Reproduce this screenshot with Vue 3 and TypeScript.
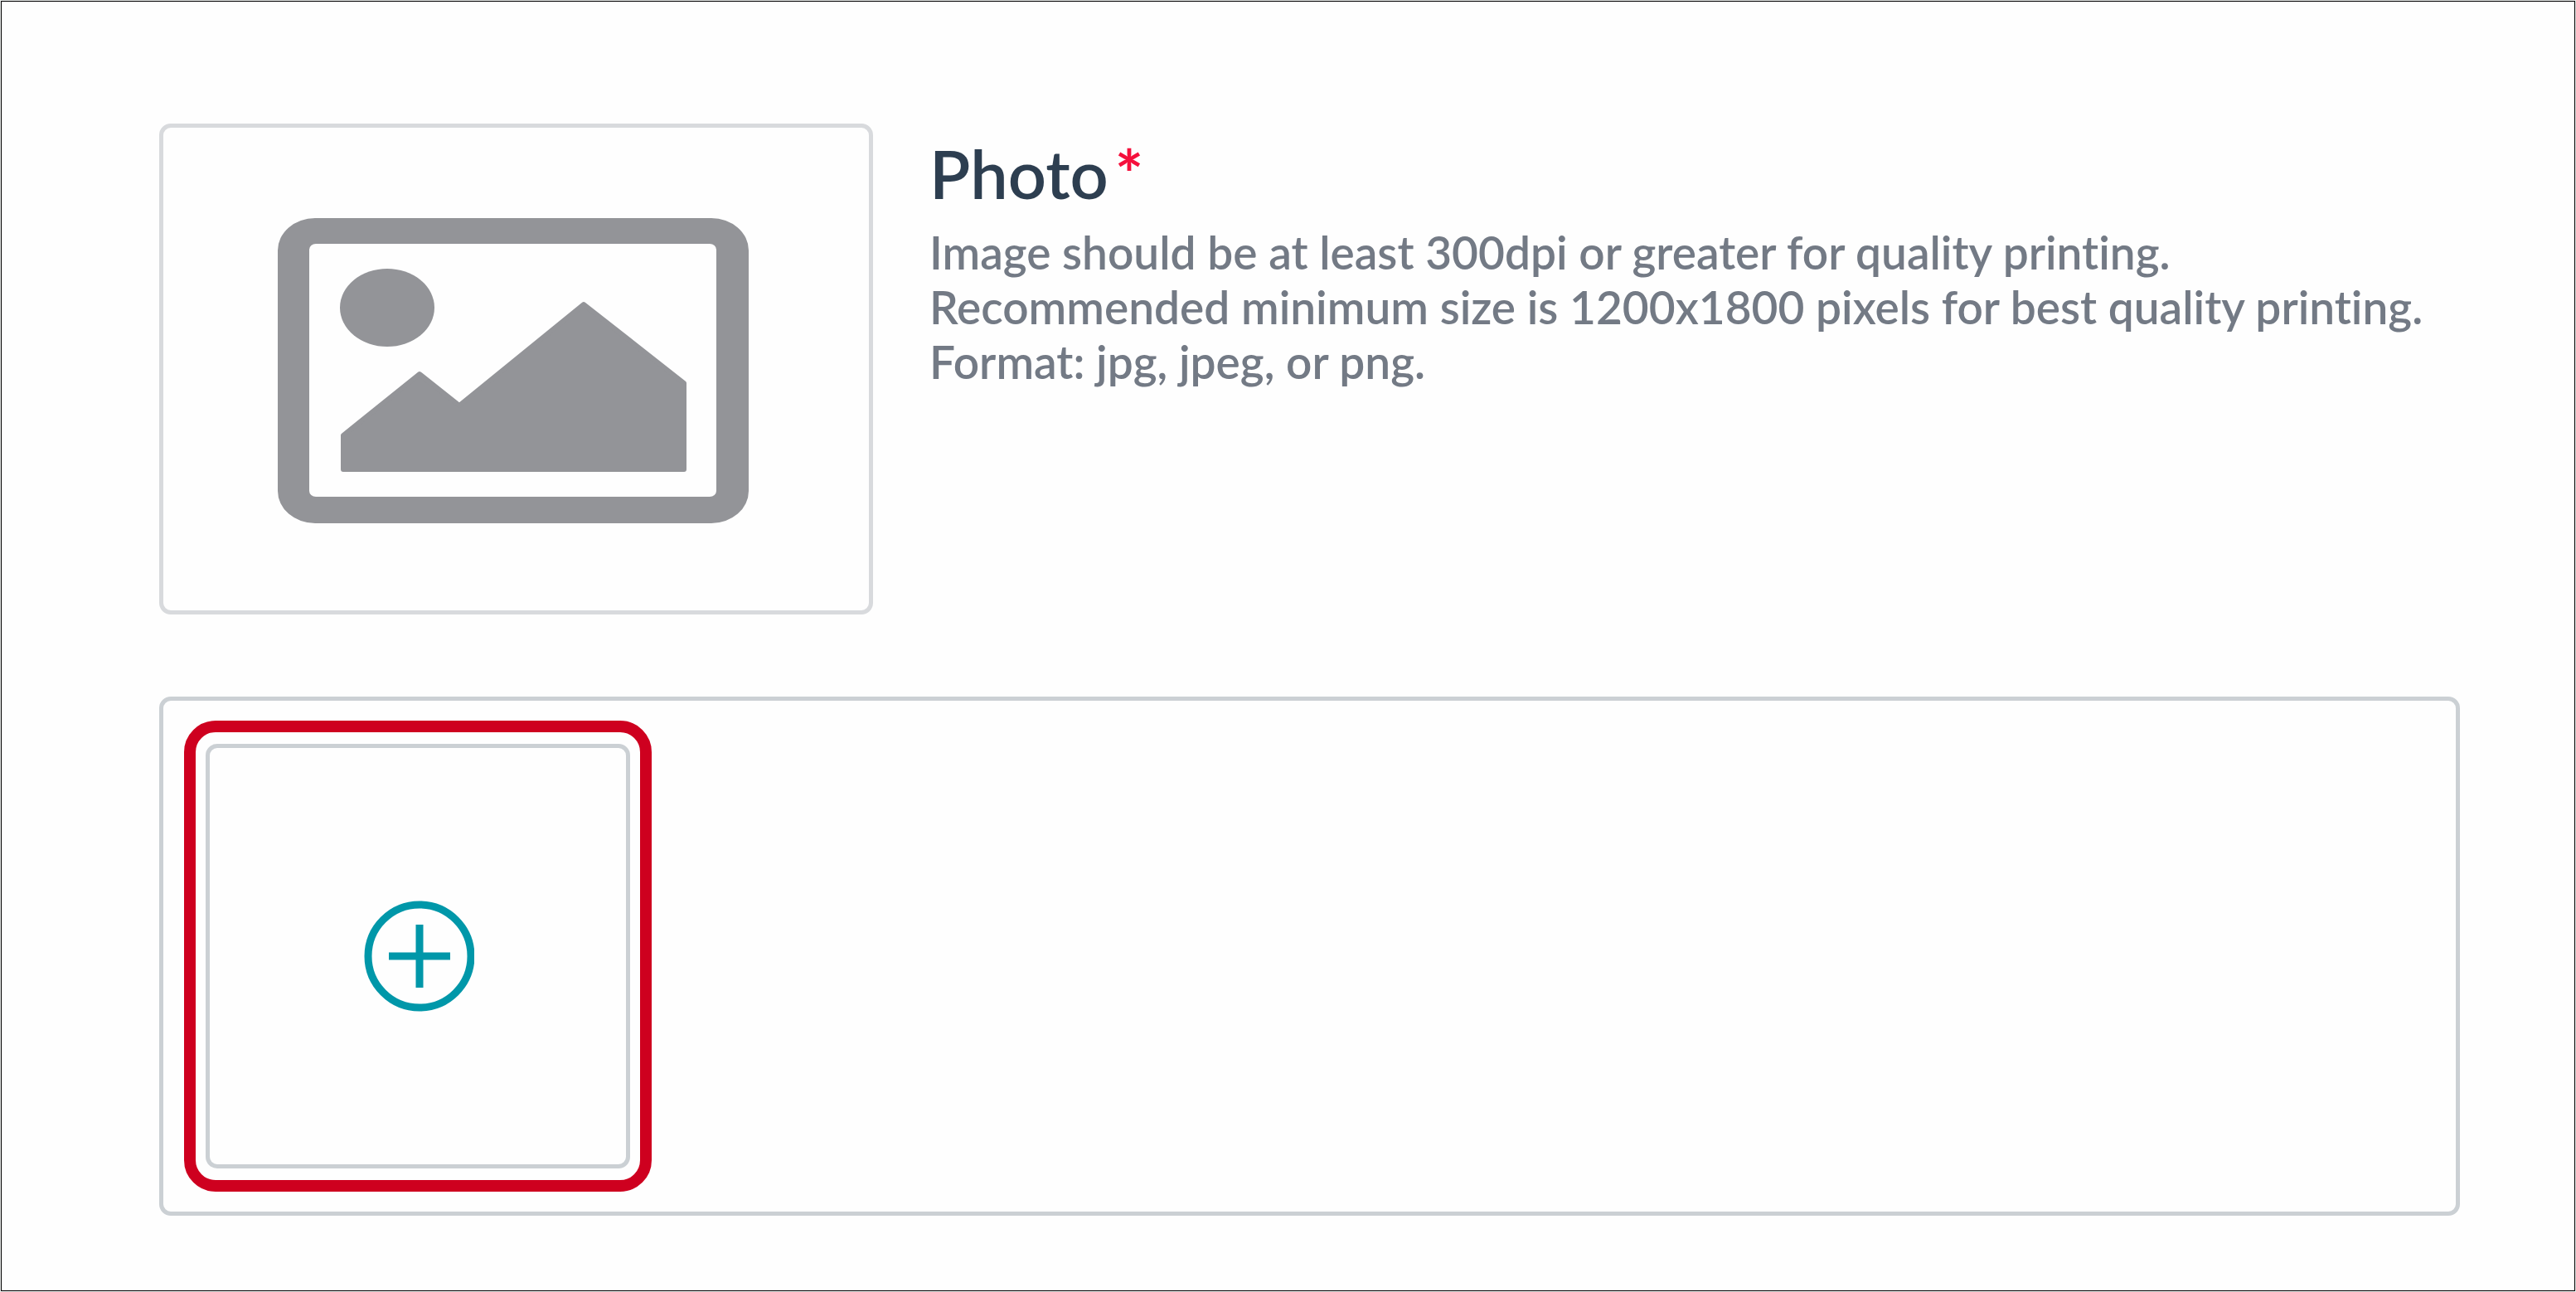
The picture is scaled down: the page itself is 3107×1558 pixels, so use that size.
<script setup lang="ts">
const title = 'Photo'
const hints: string[] = [
  'Image should be at least 300dpi or greater for quality printing.',
  'Recommended minimum size is 1200x1800 pixels for best quality printing.',
  'Format: jpg, jpeg, or png.',
]
</script>

<template>
  <div class="page">
    <main class="panel">
      <section class="intro">
        <div class="preview">
          <svg viewBox="0 0 851 582" role="img" aria-label="Photo placeholder">
            <path
              fill="#939498"
              fill-rule="evenodd"
              d="M183 109H661A45 39 0 0 1 706 148V438A45 39 0 0 1 661 477H183A45 39 0 0 1 138 438V148A45 39 0 0 1 183 109ZM184 140A8 7 0 0 0 176 147V438A8 7 0 0 0 184 445H659A8 7 0 0 0 667 438V147A8 7 0 0 0 659 140Z"
            />
            <ellipse cx="270" cy="217" rx="57" ry="47" fill="#939498" />
            <path
              fill="#939498"
              stroke="#939498"
              stroke-width="6"
              stroke-linejoin="round"
              d="M217 371L309 297L357 335L507 213L628 308V412H217Z"
            />
          </svg>
        </div>
        <div class="details">
          <h2 class="title">{{ title }}<span class="required">*</span></h2>
          <p class="hint">
            <span v-for="line in hints" :key="line" class="line">{{ line }}</span>
          </p>
        </div>
      </section>

      <section class="uploads">
        <div class="highlight">
          <button type="button" class="add" aria-label="Add photo">
            <svg viewBox="0 0 136 136" width="136" height="136" fill="none" stroke="#0097a9">
              <circle cx="70" cy="68" r="62" stroke-width="9" />
              <path d="M70 30V106M33 68H107" stroke-width="9" />
            </svg>
          </button>
        </div>
      </section>
    </main>
  </div>
</template>

<style>
body {
  margin: 0;
  background: #e9ebea;
}
</style>

<style scoped>
.page {
  box-sizing: border-box;
  min-height: 100vh;
  padding: 1px;
  display: flex;
}

.panel {
  box-sizing: border-box;
  flex: 1;
  min-width: 0;
  padding: 147px 138px 90px 190px;
  border: 1px solid #000;
  background: #fefefe;
  font-family: Lato, 'Open Sans', sans-serif;
  font-variant-ligatures: none;
}

.intro {
  display: flex;
  align-items: flex-start;
  gap: 68px;
  margin-bottom: 99px;
}

.preview {
  flex: none;
  border: 5px solid #d8dadd;
  border-radius: 14px;
}

.preview svg {
  display: block;
  width: 851px;
  height: 582px;
}

.title {
  margin: 20px 0 22px;
  color: #2d3e50;
  font-size: 81px;
  font-weight: 600;
  line-height: 80px;
}

.required {
  margin-left: 8px;
  color: #f5103c;
  font-weight: 700;
}

.hint {
  margin: 0;
  color: #737a85;
  font-size: 55px;
  font-weight: 600;
  line-height: 66px;
}

.line {
  display: block;
}

.uploads {
  display: flex;
  padding: 24px 25px;
  border: 5px solid #cbd0d4;
  border-radius: 14px;
}

.highlight {
  padding: 14px 12px;
  border: 14px solid #ce001f;
  border-radius: 38px;
}

.add {
  display: flex;
  align-items: center;
  justify-content: center;
  width: 512px;
  height: 512px;
  padding: 0;
  border: 5px solid #cbd0d4;
  border-radius: 14px;
  background: #fefefe;
  cursor: pointer;
}
</style>
